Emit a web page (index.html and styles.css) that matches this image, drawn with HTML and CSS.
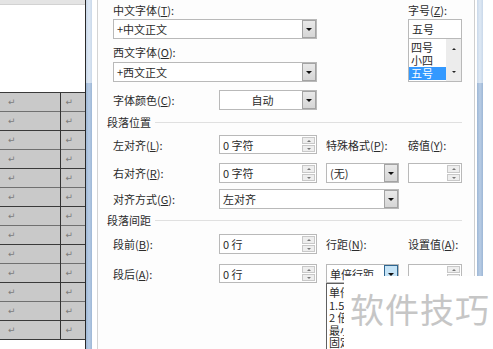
FILE: index.html
```html
<!DOCTYPE html>
<html lang="zh-CN">
<head>
    <meta charset="UTF-8">
    <title>修改样式</title>
    <link rel="stylesheet" href="styles.css">
</head>
<body>
    <div class="screen">
        <div class="doc">
            <div class="ruler"></div>
            <table class="cells">
                <tr><td>↵</td><td>↵</td></tr>
                <tr><td>↵</td><td>↵</td></tr>
                <tr><td>↵</td><td>↵</td></tr>
                <tr><td>↵</td><td>↵</td></tr>
                <tr><td>↵</td><td>↵</td></tr>
                <tr><td>↵</td><td>↵</td></tr>
                <tr><td>↵</td><td>↵</td></tr>
                <tr><td>↵</td><td>↵</td></tr>
                <tr><td>↵</td><td>↵</td></tr>
                <tr><td>↵</td><td>↵</td></tr>
                <tr><td>↵</td><td>↵</td></tr>
                <tr><td>↵</td><td>↵</td></tr>
                <tr><td>↵</td><td>↵</td></tr>
            </table>
        </div>
        <div class="frame"></div>
        <div class="gap"></div>

        <div class="dialog">
            <div class="font-area">
                <div class="font-left">
                    <div class="lbl">中文字体(<u>T</u>):</div>
                    <div class="combo first"><span class="val">+中文正文</span><i class="drop"></i></div>
                    <div class="lbl second-lbl">西文字体(<u>O</u>):</div>
                    <div class="combo second"><span class="val">+西文正文</span><i class="drop"></i></div>
                    <div class="color-row">
                        <span class="lbl color-lbl">字体颜色(<u>C</u>):</span>
                        <div class="combo color"><span class="val center">自动</span><i class="drop"></i></div>
                    </div>
                </div>
                <div class="font-size">
                    <div class="lbl">字号(<u>Z</u>):</div>
                    <div class="size-input">五号</div>
                    <div class="size-list">
                        <ul>
                            <li>四号</li>
                            <li>小四</li>
                            <li class="sel">五号</li>
                        </ul>
                        <div class="vscroll"><i class="up"></i><i class="down"></i></div>
                    </div>
                </div>
            </div>

            <div class="group-title"><span>段落位置</span><i></i></div>
            <div class="prow row-a">
                <span class="lbl">左对齐(<u>L</u>):</span>
                <div class="spin"><span class="val">0 字符</span><span class="arrows"><i></i><i></i></span></div>
                <span class="lbl">特殊格式(<u>P</u>):</span>
                <span class="lbl">磅值(<u>Y</u>):</span>
            </div>
            <div class="prow row-b">
                <span class="lbl">右对齐(<u>R</u>):</span>
                <div class="spin"><span class="val">0 字符</span><span class="arrows"><i></i><i></i></span></div>
                <div class="combo"><span class="val">(无)</span><i class="drop"></i></div>
                <div class="spin"><span class="val"></span><span class="arrows"><i></i><i></i></span></div>
            </div>
            <div class="prow row-c">
                <span class="lbl">对齐方式(<u>G</u>):</span>
                <div class="combo span2"><span class="val">左对齐</span><i class="drop"></i></div>
            </div>

            <div class="group-title second-group"><span>段落间距</span><i></i></div>
            <div class="prow row-d">
                <span class="lbl">段前(<u>B</u>):</span>
                <div class="spin"><span class="val">0 行</span><span class="arrows"><i></i><i></i></span></div>
                <span class="lbl">行距(<u>N</u>):</span>
                <span class="lbl">设置值(<u>A</u>):</span>
            </div>
            <div class="prow row-e">
                <span class="lbl">段后(<u>A</u>):</span>
                <div class="spin"><span class="val">0 行</span><span class="arrows"><i></i><i></i></span></div>
                <div class="combo open"><span class="val">单倍行距</span><i class="drop"></i>
                    <ul class="drop-list">
                        <li>单倍行距</li>
                        <li>1.5 倍行距</li>
                        <li>2 倍行距</li>
                        <li>最小值</li>
                        <li>固定值</li>
                    </ul>
                </div>
                <div class="spin"><span class="val"></span><span class="arrows"><i></i><i></i></span></div>
            </div>
        </div>

        <div class="gap2"></div>
        <div class="frame"></div>
        <div class="rest"></div>

        <div class="watermark">软件技巧</div>
    </div>
</body>
</html>
```

FILE: styles.css
```css
* {
    box-sizing: border-box;
}
body {
    margin: 0;
    font-family: "Noto Sans CJK SC", "Liberation Sans", sans-serif;
    font-size: 11px;
    color: #2b2b2b;
    background: #fff;
}
u {
    text-decoration-thickness: 1px;
    text-underline-offset: 1px;
}
.screen {
    position: relative;
    display: flex;
    width: 493px;
    height: 349px;
    overflow: hidden;
}

/* document on the left */
.doc {
    flex: 0 0 86px;
    border-right: 1px solid #2a2a2a;
}
.ruler {
    height: 5px;
    background: #e4e4e4;
    border-bottom: 1px solid #d2d2d2;
}
.cells {
    margin-top: 87px;
    width: 85px;
    border-collapse: collapse;
}
.cells td {
    height: 19px;
    padding: 0 0 0 8px;
    background: #c9c9c9;
    border-top: 1px solid #3a3a3a;
    color: #7c7c7c;
    font-family: "DejaVu Sans", sans-serif;
    font-size: 9px;
}
.cells tr:nth-child(even) td {
    border-top-color: #707070;
}
.cells tr:last-child td {
    border-bottom: 1px solid #3a3a3a;
}
.cells td:first-child {
    width: 60px;
}
.cells td + td {
    border-left: 1px solid #333;
    padding-left: 5px;
}

.frame {
    flex: 0 0 6px;
    background: linear-gradient(to right, #c9d8ea, #dfe9f4 50%, #c9d8ea);
}
.frame::after {
    content: "";
    display: block;
    margin-top: 83px;
    height: 266px;
    background: linear-gradient(to right, #9db7d6, #b9cde5 50%, #9db7d6);
}
.gap {
    flex: 0 0 5px;
}
.gap2 {
    flex: 0 0 2px;
}
.rest {
    flex: 1;
}

/* dialog */
.dialog {
    flex: 0 0 378px;
    background: #fdfdfd;
    border-left: 1px solid #d4d4d4;
    border-right: 1px solid #cfcfcf;
    padding: 3px 12px 0 15px;
}
.lbl {
    display: block;
    height: 14px;
    line-height: 14px;
    white-space: nowrap;
}
.combo,
.spin,
.size-input {
    position: relative;
    display: flex;
    align-items: center;
    height: 20px;
    border: 1px solid #b9b9b9;
    background: #fff;
}
.val {
    flex: 1;
    padding-left: 3px;
    white-space: nowrap;
    overflow: hidden;
}
.val.center {
    text-align: center;
}
.drop {
    position: relative;
    flex: 0 0 14px;
    height: 18px;
    background: linear-gradient(#e9e9e9, #d6d6d6);
    border: 1px solid #a3a3a3;
}
.drop::after {
    content: "";
    position: absolute;
    left: 3px;
    top: 7px;
    border-left: 3px solid transparent;
    border-right: 3px solid transparent;
    border-top: 3px solid #111;
}

.font-area {
    display: flex;
}
.font-left {
    width: 204px;
}
.combo.first {
    margin-top: 2px;
}
.second-lbl {
    margin-top: 6px;
}
.combo.second {
    margin-top: 3px;
}
.color-row {
    display: flex;
    align-items: center;
    margin-top: 8px;
}
.color-lbl {
    width: 106px;
}
.combo.color {
    flex: 1;
}

.font-size {
    width: 54px;
    margin-left: 91px;
}
.size-input {
    margin-top: 2px;
    padding-left: 3px;
}
.size-list {
    display: flex;
    height: 43px;
    border: 1px solid #b9b9b9;
    border-top: 0;
    background: #fff;
}
.size-list ul {
    flex: 1;
    margin: 0;
    padding: 2px 0 0;
    list-style: none;
}
.size-list li {
    height: 13px;
    line-height: 13px;
    padding-left: 2px;
}
.size-list li.sel {
    background: #3399ff;
    color: #fff;
}
.vscroll {
    flex: 0 0 15px;
    background: #ececec;
    display: flex;
    flex-direction: column;
    justify-content: space-between;
    align-items: center;
    padding: 9px 0 8px;
}
.vscroll i {
    border-left: 2px solid transparent;
    border-right: 2px solid transparent;
}
.vscroll .up {
    border-bottom: 2px solid #222;
}
.vscroll .down {
    border-top: 2px solid #222;
}

/* paragraph groups */
.group-title {
    display: flex;
    align-items: center;
    height: 14px;
    margin: 5px 0 0 -6px;
    line-height: 14px;
}
.group-title i {
    flex: 1;
    margin-left: 4px;
    border-top: 1px solid #e0e0e0;
}
.second-group {
    margin-top: 4px;
}
.prow {
    display: grid;
    grid-template-columns: 97px 98px 73px 54px;
    column-gap: 9px;
    align-items: center;
}
.row-a {
    margin-top: 6px;
    height: 19px;
}
.row-b {
    margin-top: 9px;
    height: 20px;
}
.row-c {
    margin-top: 6px;
    height: 20px;
}
.row-d {
    margin-top: 7px;
    height: 20px;
}
.row-e {
    margin-top: 10px;
    height: 19px;
}
.row-a .spin,
.row-e .spin,
.row-e .combo {
    height: 19px;
}
.span2 {
    grid-column: 2 / 4;
}
.arrows {
    display: flex;
    flex-direction: column;
    flex: 0 0 15px;
    height: 100%;
    padding: 1px;
    gap: 1px;
}
.arrows i {
    flex: 1;
    position: relative;
    background: #eeeeee;
    border: 1px solid #c8c8c8;
}
.arrows i::after {
    content: "";
    position: absolute;
    left: 4px;
    top: 2px;
    border-left: 2px solid transparent;
    border-right: 2px solid transparent;
    border-bottom: 2px solid #777;
}
.arrows i + i::after {
    border-bottom: 0;
    border-top: 2px solid #777;
}
.combo.open .drop {
    background: #c6e4f7;
    border-color: #2f6690;
}
/* only the strip left of the watermark box is visible */
.drop-list {
    position: absolute;
    left: -1px;
    top: 18px;
    width: 20px;
    height: 70px;
    margin: 0;
    padding: 2px 0 0 2px;
    list-style: none;
    background: #fff;
    border: 1px solid #606060;
    border-right: 0;
    overflow: hidden;
    z-index: 2;
}
.drop-list li {
    height: 12.5px;
    line-height: 12.5px;
    white-space: nowrap;
    overflow: hidden;
}

/* watermark over the picture */
.watermark {
    position: absolute;
    left: 344px;
    top: 276px;
    right: 0;
    bottom: 0;
    padding: 16px 0 0 6px;
    background: #fff;
    color: #c6c6c6;
    font-size: 34px;
    line-height: 34px;
    letter-spacing: 1px;
    white-space: nowrap;
    z-index: 3;
}
```
